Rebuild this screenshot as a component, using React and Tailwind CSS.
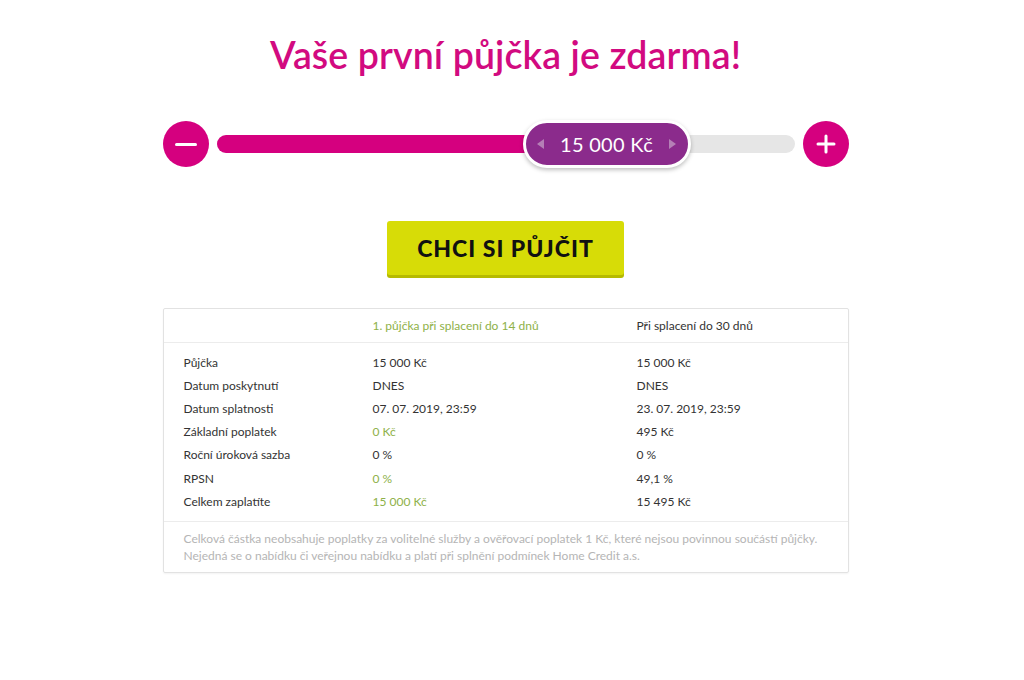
import React from 'react';

const rows = [
  { label: 'Půjčka', first: '15 000 Kč', second: '15 000 Kč' },
  { label: 'Datum poskytnutí', first: 'DNES', second: 'DNES' },
  { label: 'Datum splatnosti', first: '07. 07. 2019, 23:59', second: '23. 07. 2019, 23:59' },
  { label: 'Základní poplatek', first: '0 Kč', second: '495 Kč', green: true },
  { label: 'Roční úroková sazba', first: '0 %', second: '0 %' },
  { label: 'RPSN', first: '0 %', second: '49,1 %', green: true },
  { label: 'Celkem zaplatíte', first: '15 000 Kč', second: '15 495 Kč', green: true },
];

export default function App() {
  return (
    <div className="w-[1024px] h-[680px] bg-white overflow-hidden font-['Lato','Open_Sans',sans-serif]">
      <div className="w-[1011px]">
        {/* Title */}
        <h1 className="pt-[30px] text-center text-[37.5px] leading-[50px] font-semibold text-[#d20a80] tracking-[0.1px]">
          Vaše první půjčka je zdarma!
        </h1>

        {/* Slider */}
        <div className="mt-[40px] mx-auto w-[686px] h-[48px] flex items-center gap-[8px]">
          <button className="w-[46px] h-[46px] rounded-full bg-[#d5007f] flex items-center justify-center shrink-0">
            <span className="block w-[22px] h-[3px] bg-white rounded-sm" />
          </button>
          <div className="relative flex-1 h-[18px] rounded-full bg-[#e6e6e6]">
            <div className="absolute left-0 top-0 h-full w-[320px] rounded-l-full bg-[#d5007f]" />
            <div className="absolute left-[306px] top-[-15px] w-[168px] h-[48px] rounded-full bg-[#8b2b8c] border-[3px] border-white shadow-[0_2px_4px_rgba(0,0,0,0.25)] flex items-center justify-between px-[10px]">
              <svg width="9" height="12" viewBox="0 0 9 12"><path d="M8 1 L1 6 L8 11 Z" fill="#b57fb6" /></svg>
              <span className="text-white text-[20px] font-normal tracking-[0.3px]">15 000 Kč</span>
              <svg width="9" height="12" viewBox="0 0 9 12"><path d="M1 1 L8 6 L1 11 Z" fill="#b57fb6" /></svg>
            </div>
          </div>
          <button className="w-[46px] h-[46px] rounded-full bg-[#d5007f] flex items-center justify-center shrink-0">
            <svg width="20" height="20" viewBox="0 0 20 20">
              <path d="M10 2 V18 M2 10 H18" stroke="white" strokeWidth="3" strokeLinecap="round" />
            </svg>
          </button>
        </div>

        {/* CTA */}
        <div className="mt-[53px] flex justify-center">
          <button className="w-[237px] h-[54px] rounded-[3px] bg-[#d7dc07] shadow-[0_3px_0_#b6ba00] text-[23px] font-black text-[#111] tracking-[1px]">
            CHCI SI PŮJČIT
          </button>
        </div>

        {/* Table */}
        <div className="mt-[33px] mx-auto w-[686px] border border-[#e2e2e2] rounded-[2px] text-[12px] text-[#333] shadow-[0_1px_2px_rgba(0,0,0,0.05)]">
          <div className="grid grid-cols-[189px_264px_1fr] h-[34px] items-center border-b border-[#ececec] pl-[20px]">
            <span />
            <span className="text-[#8eb148]">1. půjčka při splacení do 14 dnů</span>
            <span>Při splacení do 30 dnů</span>
          </div>
          <div className="pt-[8px] pb-[8px] border-b border-[#ececec]">
            {rows.map((r) => (
              <div key={r.label} className="grid grid-cols-[189px_264px_1fr] h-[23.2px] items-center pl-[20px]">
                <span>{r.label}</span>
                <span className={r.green ? 'text-[#8eb148]' : ''}>{r.first}</span>
                <span>{r.second}</span>
              </div>
            ))}
          </div>
          <div className="px-[20px] pt-[8px] pb-[8px] leading-[17px] text-[#b5b5b5]">
            <p>Celková částka neobsahuje poplatky za volitelné služby a ověřovací poplatek 1 Kč, které nejsou povinnou součástí půjčky.</p>
            <p>Nejedná se o nabídku či veřejnou nabídku a platí při splnění podmínek Home Credit a.s.</p>
          </div>
        </div>
      </div>
    </div>
  );
}
